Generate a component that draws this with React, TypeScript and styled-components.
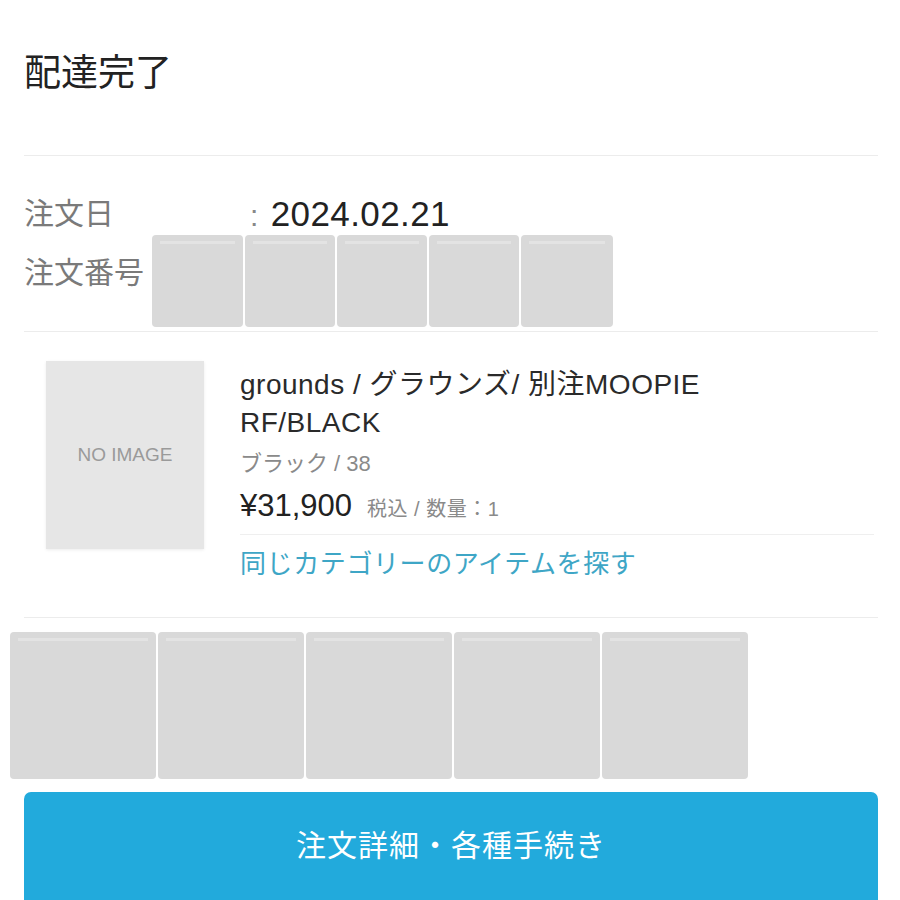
import styled, { createGlobalStyle } from 'styled-components';

const GlobalStyle = createGlobalStyle`
  html, body {
    margin: 0;
    padding: 0;
    background: #ffffff;
  }
  body {
    font-family: "Liberation Sans", "Noto Sans CJK JP", sans-serif;
    color: #222;
  }
`;

const Page = styled.div`
  width: 900px;
  height: 900px;
  overflow: hidden;
  background: #fff;
`;

const Header = styled.div`
  margin: 0 22px 0 24px;
  height: 156px;
  border-bottom: 1px solid #ececec;
  box-sizing: border-box;
`;

const Title = styled.h1`
  margin: 0;
  padding-top: 52px;
  font-size: 37px;
  line-height: 44px;
  font-weight: 400;
  color: #222;
`;

const Info = styled.div`
  margin: 0 22px 0 24px;
  padding: 38px 0 4px;
  border-bottom: 1px solid #ececec;
`;

const InfoRow = styled.div`
  display: flex;
  align-items: flex-start;
`;

const Label = styled.div<{ $width?: number; $top?: number }>`
  width: ${(p) => (p.$width ? `${p.$width}px` : 'auto')};
  margin-top: ${(p) => p.$top ?? 0}px;
  font-size: 30px;
  line-height: 39px;
  color: #7a7a7a;
  flex-shrink: 0;
`;

const Value = styled.div`
  font-size: 35px;
  line-height: 39px;
  color: #222;
  letter-spacing: 0.4px;
`;

const Colon = styled.span`
  color: #888;
  font-size: 30px;
  margin-right: 12px;
`;

const BlockRow = styled.div<{ $offset: number; $gap: number }>`
  display: flex;
  gap: ${(p) => p.$gap}px;
  margin-left: ${(p) => p.$offset}px;
`;

const Block = styled.div<{ $w: number; $h: number }>`
  width: ${(p) => p.$w}px;
  height: ${(p) => p.$h}px;
  background: #d9d9d9;
  border-radius: 4px;
  box-sizing: border-box;
  padding: 6px 8px 0;

  &::before {
    content: '';
    display: block;
    height: 3px;
    background: #e3e3e3;
  }
`;

const Product = styled.div`
  margin: 0 22px 0 24px;
  padding: 29px 0 0 22px;
  height: 286px;
  box-sizing: border-box;
  border-bottom: 1px solid #ececec;
  display: flex;
  gap: 36px;
`;

const Thumb = styled.div`
  width: 158px;
  height: 188px;
  background: #e6e6e6;
  box-shadow: 0 1px 3px rgba(0, 0, 0, 0.08);
  display: flex;
  align-items: center;
  justify-content: center;
  font-size: 19px;
  color: #9a9a9a;
  flex-shrink: 0;
`;

const Details = styled.div`
  flex: 1;
  padding-right: 4px;
`;

const Name = styled.div`
  font-size: 28px;
  line-height: 38px;
  letter-spacing: 0.5px;
  color: #2a2a2a;
  margin-top: 5px;
`;

const Variant = styled.div`
  font-size: 22px;
  line-height: 32px;
  color: #8a8a8a;
  margin-top: 6px;
`;

const PriceLine = styled.div`
  display: flex;
  align-items: baseline;
  gap: 15px;
  margin-top: 8px;
  padding-bottom: 10px;
  border-bottom: 1px solid #efefef;
`;

const Price = styled.span`
  font-size: 31px;
  line-height: 36px;
  color: #222;
`;

const Note = styled.span`
  font-size: 20px;
  letter-spacing: 0.5px;
  color: #8a8a8a;
`;

const CategoryLink = styled.a`
  display: block;
  margin-top: 12px;
  font-size: 26px;
  line-height: 34px;
  color: #3ea6c6;
  text-decoration: none;
  letter-spacing: 0.6px;
`;

const Cover = styled.div`
  padding: 14px 0 0;
`;

const ActionButton = styled.button`
  display: block;
  width: 854px;
  height: 130px;
  margin: 13px 0 0 24px;
  border: none;
  border-radius: 7px;
  background: #22aadc;
  color: #fff;
  font-family: inherit;
  font-size: 30px;
  letter-spacing: 1px;
  padding: 34px 0 76px;
  line-height: 40px;
  box-sizing: border-box;
`;

export default function App() {
  return (
    <Page>
      <GlobalStyle />
      <Header>
        <Title>配達完了</Title>
      </Header>
      <Info>
        <InfoRow>
          <Label $width={226}>注文日</Label>
          <Value>
            <Colon>:</Colon>2024.02.21
          </Value>
        </InfoRow>
        <InfoRow>
          <Label $top={18}>注文番号</Label>
          <BlockRow $offset={8} $gap={2}>
            {[91, 90, 90, 90, 92].map((w, i) => (
              <Block key={i} $w={w} $h={92} />
            ))}
          </BlockRow>
        </InfoRow>
      </Info>
      <Product>
        <Thumb>NO IMAGE</Thumb>
        <Details>
          <Name>
            grounds / グラウンズ/ 別注MOOPIE
            <br />
            RF/BLACK
          </Name>
          <Variant>ブラック / 38</Variant>
          <PriceLine>
            <Price>¥31,900</Price>
            <Note>税込 / 数量：1</Note>
          </PriceLine>
          <CategoryLink>同じカテゴリーのアイテムを探す</CategoryLink>
        </Details>
      </Product>
      <Cover>
        <BlockRow $offset={10} $gap={2}>
          {[146, 146, 146, 146, 146].map((w, i) => (
            <Block key={i} $w={w} $h={147} />
          ))}
        </BlockRow>
      </Cover>
      <ActionButton>注文詳細・各種手続き</ActionButton>
    </Page>
  );
}
